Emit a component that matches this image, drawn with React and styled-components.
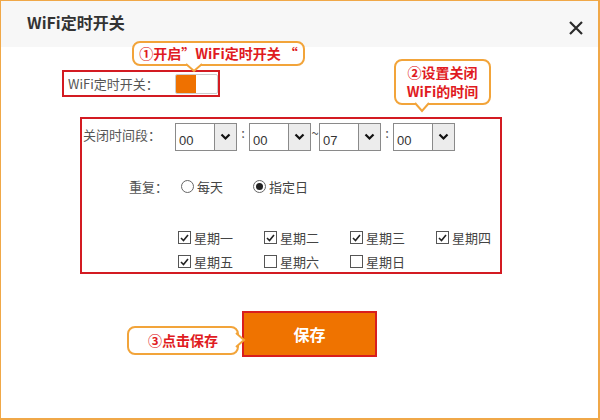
import React from 'react'
import styled, { createGlobalStyle } from 'styled-components'

const GlobalStyle = createGlobalStyle`
  html, body {
    margin: 0;
    padding: 0;
    background: #fff;
  }
  body {
    font-family: "Noto Sans CJK SC", "Liberation Sans", sans-serif;
  }
`

const Window = styled.div`
  position: relative;
  width: 600px;
  height: 420px;
  box-sizing: border-box;
  border: 1px solid #f0a848;
  border-right-width: 2px;
  border-bottom-width: 2px;
  background: #fff;
  overflow: hidden;
`

const Header = styled.div`
  height: 46px;
  background: #f7f7f7;
  display: flex;
  align-items: center;
  justify-content: space-between;
  padding: 0 14px 0 26px;
`

const Title = styled.div`
  font-size: 16px;
  font-weight: bold;
  color: #333;
  margin-top: -4px;
`

const Close = styled.div`
  width: 16px;
  height: 16px;
  margin-top: 8px;
  display: flex;
`

const Body = styled.div`
  display: flex;
  flex-direction: column;
  align-items: flex-start;
`

const SwitchRow = styled.div`
  margin: 23px 0 0 61px;
  width: 158px;
  height: 27px;
  box-sizing: border-box;
  border: 2px solid #d31b22;
  display: flex;
  align-items: center;
  padding-left: 4px;
`

const Label = styled.span`
  font-size: 13px;
  color: #555;
  white-space: nowrap;
  width: 108px;
`

const Toggle = styled.div`
  width: 43px;
  height: 20px;
  display: flex;
  border-radius: 2px;
  overflow: hidden;
  border: 1px solid #ccc;
  box-sizing: border-box;
`

const ToggleOn = styled.div`
  width: 20px;
  background: #ef7100;
`

const TimeBox = styled.div`
  margin: 20px 0 0 79px;
  width: 422px;
  height: 157px;
  box-sizing: border-box;
  border: 2px solid #d31b22;
  padding: 4px 0 0 0;
  display: flex;
  flex-direction: column;
`

const Row = styled.div`
  display: flex;
  align-items: ${(p) => p.align || 'center'};
  margin-top: ${(p) => p.top || 0}px;
  height: ${(p) => p.h || 20}px;
`

const RowLabel = styled.span`
  width: 86px;
  text-align: ${(p) => p.textAlign || 'right'};
  font-size: 13px;
  color: #555;
  white-space: nowrap;
  margin-right: ${(p) => p.gap || 8}px;
  padding-top: ${(p) => p.pt || 0}px;
  padding-left: ${(p) => p.pl || 0}px;
`

const Select = styled.div`
  width: 62px;
  height: 28px;
  box-sizing: border-box;
  border: 1px solid #8a8a8a;
  display: flex;
  background: #fff;
`

const SelectValue = styled.span`
  flex: 1;
  font-family: "Liberation Sans", sans-serif;
  font-size: 13px;
  color: #333;
  padding: 9px 0 0 3px;
`

const SelectBtn = styled.span`
  width: 21px;
  border-left: 1px solid #8a8a8a;
  background: #ececec;
  display: flex;
  align-items: center;
  justify-content: center;
`

const Sep = styled.span`
  width: ${(p) => p.w || 12}px;
  text-align: center;
  font-size: 13px;
  color: #555;
  margin-top: ${(p) => p.mt || 0}px;
`

const Choice = styled.label`
  display: flex;
  align-items: center;
  gap: 3px;
  width: ${(p) => p.w}px;
  font-size: 13px;
  color: #444;
`

const Radio = styled.span`
  width: 11px;
  height: 11px;
  border-radius: 50%;
  border: 1px solid #666;
  display: flex;
  align-items: center;
  justify-content: center;
  background: #fff;
  &::after {
    content: '';
    width: 7px;
    height: 7px;
    border-radius: 50%;
    background: ${(p) => (p.checked ? '#222' : 'transparent')};
  }
`

const Box = styled.span`
  width: 11px;
  height: 11px;
  border: 1px solid #555;
  display: flex;
  align-items: center;
  justify-content: center;
  background: #fff;
`

const DayGrid = styled.div`
  display: grid;
  grid-template-columns: repeat(4, 86px);
  row-gap: 5px;
  margin: 32px 0 0 96px;
`

const SaveButton = styled.button`
  margin: 37px 0 0 241px;
  width: 135px;
  height: 46px;
  background: #ef7300;
  border: 2px solid #d81e1e;
  color: #fff;
  font-family: "Noto Sans CJK SC", sans-serif;
  font-size: 16px;
  font-weight: bold;
  cursor: pointer;
`

const Callout = styled.div`
  position: absolute;
  left: ${(p) => p.x}px;
  top: ${(p) => p.y}px;
  width: ${(p) => p.w}px;
  height: ${(p) => p.h}px;
  box-sizing: border-box;
  border: 2px solid #f2a43a;
  border-radius: 8px;
  background: #fff;
  color: #e01b22;
  font-size: 14px;
  font-weight: bold;
  line-height: 19px;
  display: flex;
  flex-direction: column;
  align-items: center;
  justify-content: center;
  text-align: center;
  white-space: nowrap;
`

const Pointer = styled.svg`
  position: absolute;
  overflow: visible;
`

const Chevron = () => (
  <svg width="11" height="8" viewBox="0 0 11 8">
    <path d="M1.5 1.5 L5.5 5.5 L9.5 1.5" fill="none" stroke="#111" strokeWidth="2.2" />
  </svg>
)

const Check = () => (
  <svg width="9" height="8" viewBox="0 0 9 8">
    <path d="M1 4 L3.5 6.5 L8 1" fill="none" stroke="#222" strokeWidth="1.6" />
  </svg>
)

const TimeSelect = ({ value }) => (
  <Select>
    <SelectValue>{value}</SelectValue>
    <SelectBtn>
      <Chevron />
    </SelectBtn>
  </Select>
)

const days = [
  ['星期一', true],
  ['星期二', true],
  ['星期三', true],
  ['星期四', true],
  ['星期五', true],
  ['星期六', false],
  ['星期日', false],
]

const App = () => {
  return (
    <>
      <GlobalStyle />
      <Window>
        <Header>
          <Title>WiFi定时开关</Title>
          <Close>
            <svg width="16" height="16" viewBox="0 0 16 16">
              <path d="M2 2 L14 14 M14 2 L2 14" stroke="#2b2b2b" strokeWidth="2.2" />
            </svg>
          </Close>
        </Header>
        <Body>
          <SwitchRow>
            <Label>WiFi定时开关：</Label>
            <Toggle>
              <ToggleOn />
            </Toggle>
          </SwitchRow>

          <TimeBox>
            <Row align="flex-start" h={28}>
              <RowLabel textAlign="left" pl={1} pt={2} gap={6}>关闭时间段：</RowLabel>
              <TimeSelect value="00" />
              <Sep>:</Sep>
              <TimeSelect value="00" />
              <Sep w={8}>~</Sep>
              <TimeSelect value="07" />
              <Sep>:</Sep>
              <TimeSelect value="00" />
            </Row>
            <Row top={25}>
              <RowLabel gap={13}>重复：</RowLabel>
              <Choice w={72}>
                <Radio />每天
              </Choice>
              <Choice w={80}>
                <Radio checked />指定日
              </Choice>
            </Row>
            <DayGrid>
              {days.map(([name, on]) => (
                <Choice key={name}>
                  <Box>{on && <Check />}</Box>
                  {name}
                </Choice>
              ))}
            </DayGrid>
          </TimeBox>

          <SaveButton>保存</SaveButton>
        </Body>

        <Callout x={131} y={40} w={173} h={25}>
          ①开启”WiFi定时开关 “
          <Pointer width="16" height="8" style={{ left: 52, top: 21 }}>
            <path d="M0 0 L8 7 L16 0" fill="#fff" stroke="#f2a43a" strokeWidth="2" />
          </Pointer>
        </Callout>

        <Callout x={393} y={58} w={97} h={46}>
          <span>②设置关闭</span>
          <span>WiFi的时间</span>
          <Pointer width="14" height="9" style={{ left: 19, top: 42 }}>
            <path d="M0 0 L7 8 L14 0" fill="#fff" stroke="#f2a43a" strokeWidth="2" />
          </Pointer>
        </Callout>

        <Callout x={126} y={325} w={112} h={29}>
          ③点击保存
          <Pointer width="9" height="14" style={{ left: 107, top: 5 }}>
            <path d="M0 0 L8 7 L0 14" fill="#fff" stroke="#f2a43a" strokeWidth="2" />
          </Pointer>
        </Callout>
      </Window>
    </>
  )
}

export default App
